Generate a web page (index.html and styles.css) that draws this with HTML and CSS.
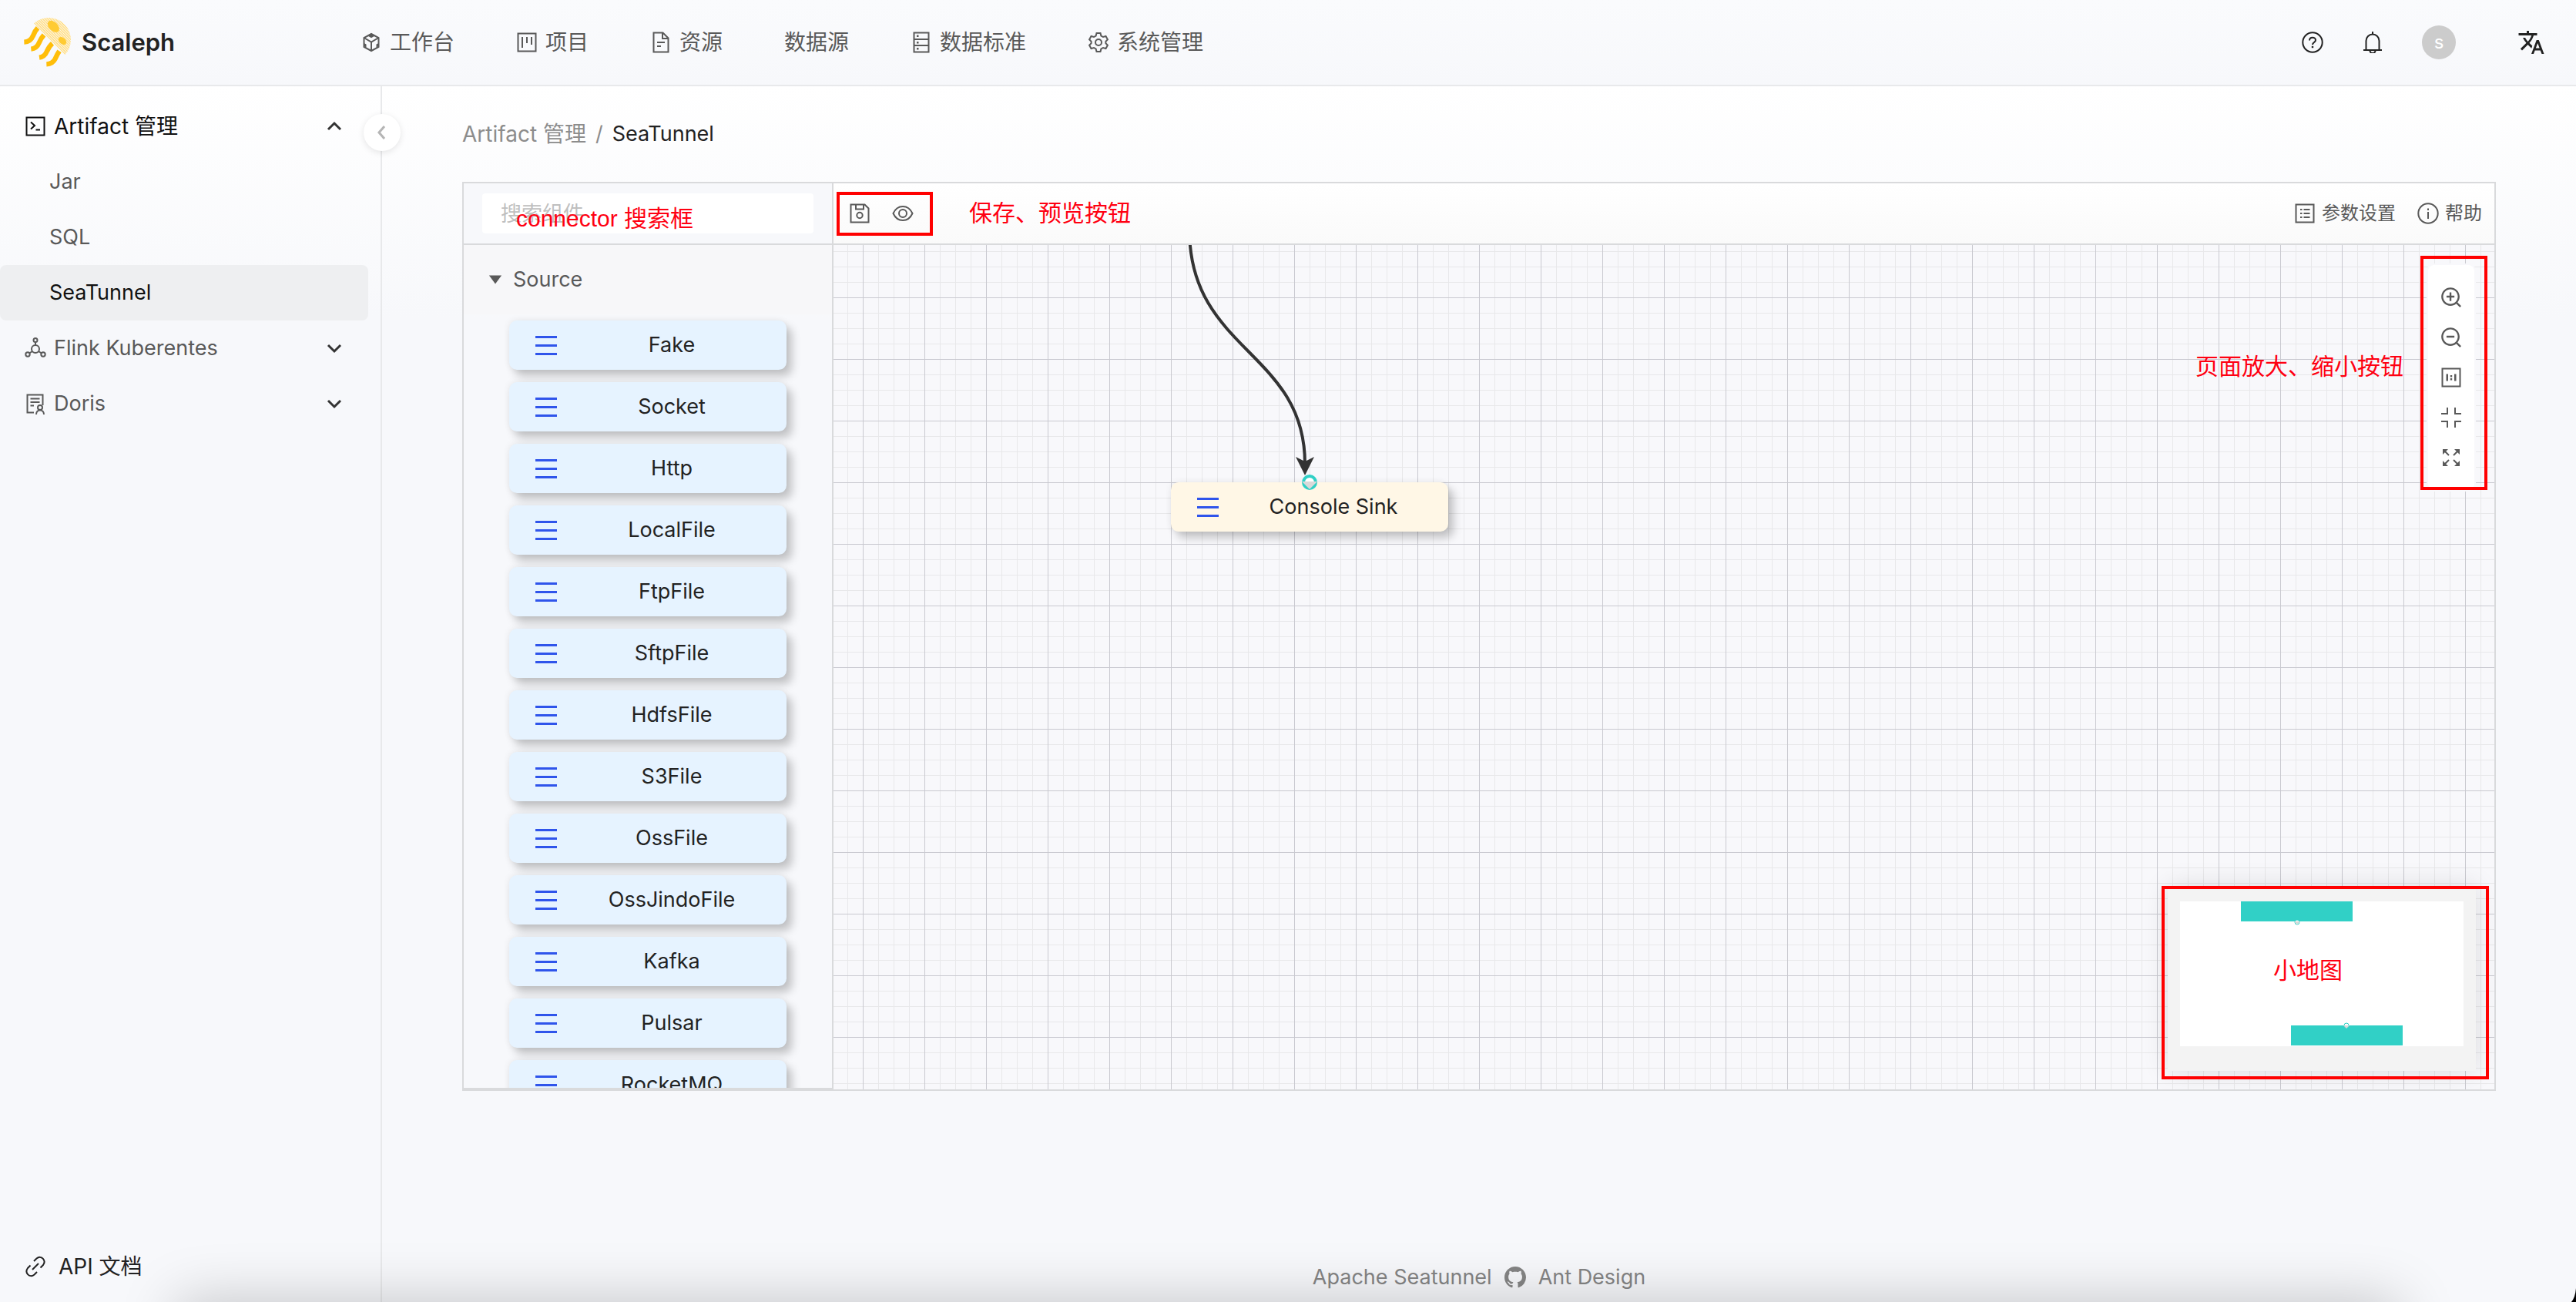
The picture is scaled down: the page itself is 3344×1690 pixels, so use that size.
FILE: index.html
```html
<!DOCTYPE html>
<html lang="zh-CN">
<head>
<meta charset="utf-8">
<title>Scaleph - SeaTunnel</title>
<link rel="stylesheet" href="styles.css">
</head>
<body>
<div class="app">
  <header class="header">
    <a class="brand" href="#">
      <svg class="brand-logo" viewBox="33 22 192 204" aria-hidden="true">
        <defs>
          <pattern id="stripes" width="7" height="7" patternUnits="userSpaceOnUse" patternTransform="rotate(45)">
            <rect width="7" height="4" fill="#ffdc80"/>
          </pattern>
        </defs>
        <g fill="none" stroke="#ffbe0a" stroke-width="19">
          <path d="M90 68Q78 80 72 98Q62 122 37 123"/>
          <path d="M114 95Q102 108 95 126Q86 148 64 150"/>
          <path d="M147 128Q135 138 126 158Q117 180 96 183"/>
          <path d="M174 158Q166 170 158 188Q148 208 124 209"/>
        </g>
        <path d="M75 50A86 86 0 0 1 196 172Z" fill="#fdf8ea"/>
        <path d="M75 50A86 86 0 0 1 196 172Z" fill="url(#stripes)"/>
        <ellipse cx="151" cy="62" rx="27" ry="17" transform="rotate(45 151 62)" fill="#ffcb33"/>
        <ellipse cx="186" cy="118" rx="18" ry="12" transform="rotate(42 186 118)" fill="#ffcb33"/>
      </svg>
      <span class="brand-name">Scaleph</span>
    </a>
    <nav class="topnav">
      <a href="#"><svg class="icon" viewBox="0 0 28 28"><path d="M14 3l9.500 5v12L14 25l-9.500-5V8z"/><path d="M4.500 8L14 13.500 23.500 8M14 13.500V25"/><path class="solid" d="M14 2.500l5 2.700-5 3-5-3zM4.500 15l3 1.600v4l-3-1.600zM23.500 15l-3 1.600v4l3-1.600z"/></svg>工作台</a>
      <a href="#"><svg class="icon" viewBox="0 0 28 28"><path d="M2.500 2.500h23v23h-23z"/><path d="M8 7v14M14 7v8M20 7v10"/></svg>项目</a>
      <a href="#"><svg class="icon" viewBox="0 0 28 28"><path d="M4.500 1.500h12l7 7v18h-19z"/><path d="M16 2v7h7M9 14h10M9 19h5"/></svg>资源</a>
      <a href="#">数据源</a>
      <a href="#"><svg class="icon" viewBox="0 0 28 28"><path d="M4.500 1.500h19v25h-19zM4.500 10h19M4.500 18h19"/><path class="solid" d="M8 4.500h2.500V7H8zM8 13h2.500v2.500H8zM8 21h2.500v2.500H8z"/></svg>数据标准</a>
      <a href="#"><svg class="icon" viewBox="0 0 28 28"><path d="M11.500 2h5l.9 3.500 2.600 1.500 3.500-1 2.400 4.300-2.500 2.500v2.400l2.500 2.500-2.400 4.300-3.500-1-2.600 1.500-.9 3.500h-5l-.9-3.500L8 21l-3.500 1-2.400-4.300 2.500-2.500v-2.400L2.100 10.300 4.500 6 8 7l2.600-1.500z"/><circle cx="14" cy="14" r="4"/></svg>系统管理</a>
    </nav>
    <div class="header-tools">
      <button class="tool" aria-label="Help"><svg class="icon dark" viewBox="0 0 28 28"><circle cx="14" cy="14" r="12.700"/><path d="M10 11.500c0-5 8-5 8-.5 0 3-4 3-4 6"/><path class="solid" d="M12.800 18.800h2.400v2.400h-2.400z"/></svg></button>
      <button class="tool" aria-label="Notifications"><svg class="icon dark" viewBox="0 0 28 28"><path d="M5.500 23V12a8.500 8.500 0 0 1 17 0v11M2 24h24M14 0v4M10.500 25a3.500 3 0 0 0 7 0"/></svg></button>
      <button class="avatar" aria-label="Account">s</button>
      <button class="tool language" aria-label="Language"><svg class="glyph" viewBox="0 0 24 24"><path d="M12.870 15.070l-2.540-2.510.03-.03c1.740-1.940 2.980-4.170 3.710-6.530H17V4h-7V2H8v2H1v1.990h11.170C11.500 7.920 10.440 9.750 9 11.350 8.070 10.320 7.300 9.190 6.690 8h-2c.73 1.630 1.730 3.170 2.980 4.560l-5.090 5.020L4 19l5-5 3.110 3.110.76-2.040zM18.500 10h-2L12 22h2l1.120-3h4.750L21 22h2l-4.500-12zm-2.620 7l1.620-4.330L19.120 17h-3.240z"/></svg></button>
    </div>
  </header>

  <div class="body">
    <aside class="sidebar">
      <nav class="sidenav">
        <a class="entry open" href="#"><svg class="icon" viewBox="0 0 28 28"><path d="M2.500 2.500h23v23h-23zM8 8.500l5 4.500-5 4.500M14.500 18.500H20"/></svg><span>Artifact 管理</span><svg class="chevron" viewBox="0 0 20 20"><path d="M2 14l8-8 8 8"/></svg></a>
        <a class="entry sub" href="#">Jar</a>
        <a class="entry sub" href="#">SQL</a>
        <a class="entry sub active" href="#">SeaTunnel</a>
        <a class="entry" href="#"><svg class="icon" viewBox="0 0 28 28"><circle cx="14" cy="3.500" r="2.500"/><circle cx="14" cy="15" r="5"/><circle cx="4" cy="22" r="2.700"/><circle cx="24" cy="22" r="2.700"/><path d="M14 6v4M10 18l-4 2.500M18 18l4 2.500"/></svg><span>Flink Kuberentes</span><svg class="chevron" viewBox="0 0 20 20"><path d="M2 6l8 8 8-8"/></svg></a>
        <a class="entry" href="#"><svg class="icon" viewBox="0 0 28 28"><path d="M12 25.500H3.500v-23h20V16M7.500 7.500h12M7.500 12h12M7.500 16.500H12"/><circle cx="20" cy="19" r="3"/><path d="M15 28c0-7.500 10-7.500 10 0"/></svg><span>Doris</span><svg class="chevron" viewBox="0 0 20 20"><path d="M2 6l8 8 8-8"/></svg></a>
      </nav>
      <a class="api-link" href="#"><svg class="icon dark" viewBox="0 0 28 28"><path d="M12 7l3.500-3.500c6-5 13 2.500 8.500 8.500l-3.500 3.500M16 21l-3.500 3.500c-6 5-13-2.500-8.500-8.500L7.500 12.500M10 18l8-8"/></svg>API 文档</a>
      <button class="collapse" aria-label="Collapse"><svg viewBox="0 0 20 20"><path d="M13 2l-7 8 7 8"/></svg></button>
    </aside>

    <main class="main">
      <nav class="breadcrumb"><a href="#">Artifact 管理</a><span>/</span><b>SeaTunnel</b></nav>

      <section class="editor">
        <div class="palette">
          <div class="search">
            <input type="text" placeholder="搜索组件" aria-label="搜索组件">
            <span class="note note-search">connector 搜索框</span>
          </div>
          <button class="group"><svg viewBox="0 0 20 20"><path d="M1 4h18l-9 12z"/></svg>Source</button>
          <ul class="components">
            <li class="component"><i class="bars"></i><span>Fake</span></li>
            <li class="component"><i class="bars"></i><span>Socket</span></li>
            <li class="component"><i class="bars"></i><span>Http</span></li>
            <li class="component"><i class="bars"></i><span>LocalFile</span></li>
            <li class="component"><i class="bars"></i><span>FtpFile</span></li>
            <li class="component"><i class="bars"></i><span>SftpFile</span></li>
            <li class="component"><i class="bars"></i><span>HdfsFile</span></li>
            <li class="component"><i class="bars"></i><span>S3File</span></li>
            <li class="component"><i class="bars"></i><span>OssFile</span></li>
            <li class="component"><i class="bars"></i><span>OssJindoFile</span></li>
            <li class="component"><i class="bars"></i><span>Kafka</span></li>
            <li class="component"><i class="bars"></i><span>Pulsar</span></li>
            <li class="component"><i class="bars"></i><span>RocketMQ</span></li>
          </ul>
        </div>

        <div class="workspace">
          <div class="toolbar">
            <div class="actions">
              <button class="tool" aria-label="保存"><svg class="icon" viewBox="0 0 28 28"><path d="M2.500 2.500h18l5 5v18h-23zM9 2.500v6h10v-6"/><circle cx="14" cy="16.500" r="3.700"/></svg></button>
              <button class="tool" aria-label="预览"><svg class="icon" viewBox="0 0 28 28"><path d="M1.500 14C7 2 21 2 26.500 14 21 26 7 26 1.500 14z"/><circle cx="14" cy="14" r="5"/></svg></button>
            </div>
            <span class="note">保存、预览按钮</span>
            <div class="settings">
              <button class="labelled"><svg class="icon" viewBox="0 0 28 28"><path d="M2.500 2.500h23v23h-23zM12.500 9h8M12.500 14h8M12.500 19h8M8 9h2.500M8 14h2.500M8 19h2.500"/></svg>参数设置</button>
              <button class="labelled"><svg class="icon" viewBox="0 0 28 28"><circle cx="14" cy="14" r="12.700"/><path d="M14 12v9M14 7.500V10"/></svg>帮助</button>
            </div>
          </div>

          <div class="canvas">
            <svg class="edges" aria-hidden="true">
              <path d="M462 -20C462 138 612 138 612 284" fill="none" stroke="#333" stroke-width="4"/>
              <path d="M612 299L600 275L612 281L624 275Z" fill="#333"/>
            </svg>
            <div class="component node">
              <i class="bars"></i><span>Console Sink</span>
              <svg class="port" viewBox="0 0 20 20"><circle cx="10" cy="10" r="8" fill="#fff" stroke="#31d0c6" stroke-width="4"/><path d="M0 9h20L10 19z" fill="#d9d9d9"/></svg>
            </div>

            <span class="note note-zoom">页面放大、缩小按钮</span>
            <div class="zoombar">
              <button class="tool" aria-label="放大"><svg class="glyph" viewBox="64 64 896 896"><path d="M637 443H519V309c0-4.400-3.600-8-8-8h-60c-4.400 0-8 3.600-8 8v134H325c-4.400 0-8 3.600-8 8v60c0 4.400 3.600 8 8 8h118v134c0 4.400 3.600 8 8 8h60c4.400 0 8-3.600 8-8V519h118c4.400 0 8-3.600 8-8v-60c0-4.400-3.600-8-8-8zm284 424L775 721c122.100-148.900 113.600-369.500-26-509-148-148.100-388.400-148.100-537 0-148.100 148.600-148.100 389 0 537 139.500 139.600 360.100 148.100 509 26l146 146c3.200 2.800 8.300 2.800 11 0l43-43c2.800-2.700 2.800-7.800 0-11zM696 696c-118.800 118.700-311.200 118.700-430 0-118.700-118.800-118.700-311.200 0-430 118.800-118.700 311.200-118.700 430 0 118.700 118.800 118.700 311.200 0 430z"/></svg></button>
              <button class="tool" aria-label="缩小"><svg class="glyph" viewBox="64 64 896 896"><path d="M637 443H325c-4.400 0-8 3.600-8 8v60c0 4.400 3.600 8 8 8h312c4.400 0 8-3.600 8-8v-60c0-4.400-3.600-8-8-8zm284 424L775 721c122.100-148.900 113.600-369.500-26-509-148-148.100-388.400-148.100-537 0-148.100 148.600-148.100 389 0 537 139.500 139.600 360.100 148.100 509 26l146 146c3.200 2.800 8.300 2.800 11 0l43-43c2.800-2.700 2.800-7.800 0-11zM696 696c-118.800 118.700-311.200 118.700-430 0-118.700-118.800-118.700-311.200 0-430 118.800-118.700 311.200-118.700 430 0 118.700 118.800 118.700 311.200 0 430z"/></svg></button>
              <button class="tool" aria-label="实际大小"><svg class="icon" viewBox="0 0 28 28"><path d="M2.500 2.500h23v23h-23z"/><path class="solid" d="M7.500 9.500H10v9H7.500zM18 9.500h2.500v9H18zM12.800 11h2.400v2.500h-2.400zM12.800 15h2.400v2.500h-2.400z"/></svg></button>
              <button class="tool" aria-label="适应画布"><svg class="icon" viewBox="0 0 28 28"><path d="M1 9h8V1M27 9h-8V1M1 19h8v8M27 19h-8v8"/></svg></button>
              <button class="tool" aria-label="全屏"><svg class="icon" viewBox="0 0 28 28"><path d="M4 4l7 7M24 4l-7 7M4 24l7-7M24 24l-7-7"/><path class="solid" d="M3 3h7l-7 7zM25 3h-7l7 7zM3 25h7l-7-7zM25 25h-7l7-7z"/></svg></button>
              <i class="frame frame-zoom"></i>
            </div>

            <div class="minimap">
              <svg viewBox="0 0 368 188" aria-hidden="true">
                <path d="M0 0h368v188H0z" fill="#fff"/>
                <path d="M79 0h145v26H79zM144 161h145v26H144z" fill="#31d0c6"/>
                <g fill="#fff" stroke="#31d0c6"><circle cx="152" cy="27" r="3"/><circle cx="216" cy="161" r="3"/></g>
                <path d="M148 26h8l-4 4zM212 161h8l-4 4z" fill="#d9d9d9"/>
              </svg>
              <span class="note note-map">小地图</span>
              <i class="frame frame-map"></i>
            </div>
          </div>
        </div>
      </section>

      <footer class="footer">
        <a href="#">Apache Seatunnel</a>
        <a href="#" aria-label="GitHub"><svg class="glyph" viewBox="0 0 16 16"><path d="M8 0C3.580 0 0 3.580 0 8c0 3.540 2.290 6.530 5.470 7.590.4.070.55-.17.55-.38 0-.19-.01-.82-.01-1.490-2.010.37-2.530-.49-2.690-.94-.09-.23-.48-.94-.82-1.130-.28-.15-.68-.52-.01-.53.63-.01 1.080.58 1.230.82.72 1.210 1.870.87 2.330.66.070-.52.28-.87.51-1.070-1.780-.2-3.640-.89-3.640-3.950 0-.87.31-1.590.82-2.150-.08-.2-.36-1.020.08-2.120 0 0 .67-.21 2.200.82.64-.18 1.320-.27 2-.27.68 0 1.360.09 2 .27 1.530-1.040 2.200-.82 2.200-.82.44 1.100.16 1.920.08 2.120.51.56.82 1.270.82 2.150 0 3.070-1.870 3.750-3.650 3.950.29.25.54.73.54 1.480 0 1.070-.01 1.930-.01 2.200 0 .21.15.46.55.38A8.013 8.013 0 0016 8c0-4.420-3.580-8-8-8z"/></svg></a>
        <a href="#">Ant Design</a>
      </footer>
    </main>
  </div>
  <i class="window-shadow"></i>
  <svg class="window-corner" viewBox="0 0 6 18" aria-hidden="true"><path d="M6 0Q5 12 0 18h6z"/></svg>
</div>
</body>
</html>
```
FILE: styles.css
```css
* {
  box-sizing: border-box;
}

body {
  margin: 0;
  color: #222;
  background: #f7f8fb;
  font-family: Inter, "Noto Sans CJK SC", sans-serif;
  font-size: 27px;
  line-height: 44px;
}

a {
  color: inherit;
  text-decoration: none;
}

button {
  padding: 0;
  border: 0;
  background: none;
  color: inherit;
  font: inherit;
}

svg {
  display: block;
  flex: none;
}

.icon,
.glyph {
  width: 28px;
  height: 28px;
}

.icon {
  fill: none;
  stroke: #595959;
  stroke-width: 2;
}

.icon.dark {
  stroke: #222;
}

.icon .solid {
  fill: #595959;
  stroke: none;
}

.icon.dark .solid {
  fill: #222;
}

.glyph {
  fill: #595959;
}

.app {
  position: relative;
  display: flex;
  flex-direction: column;
  height: 100vh;
  overflow: hidden;
}

/* Header */

.header {
  display: flex;
  align-items: center;
  flex: none;
  height: 112px;
  padding: 0 40px 0 30px;
  border-bottom: 2px solid #e8e9eb;
  background: linear-gradient(#fafbfd, #f7f8fb);
}

.brand {
  display: flex;
  align-items: center;
  gap: 12px;
  width: 438px;
}

.brand-logo {
  width: 64px;
  height: 68px;
}

.brand-name {
  font-size: 31px;
  font-weight: 600;
}

.topnav {
  display: flex;
  gap: 80px;
  color: #595959;
  font-size: 28px;
}

.topnav a {
  display: flex;
  align-items: center;
  gap: 10px;
}

.header-tools {
  display: flex;
  align-items: center;
  gap: 50px;
  margin-left: auto;
}

.avatar {
  width: 44px;
  height: 44px;
  border-radius: 50%;
  background: #ccc;
  color: #fff;
  font-size: 24px;
}

.language {
  margin-left: 30px;
}

.language .glyph {
  width: 36px;
  height: 36px;
  fill: #222;
}

/* Sidebar */

.body {
  display: flex;
  flex: 1;
  min-height: 0;
  background: linear-gradient(#fff, #f7f8fb 300px);
}

.sidebar {
  position: relative;
  display: flex;
  flex-direction: column;
  flex: none;
  width: 496px;
  padding: 16px 0 24px;
  border-right: 2px solid #e8e9eb;
}

.entry {
  display: flex;
  align-items: center;
  gap: 10px;
  height: 72px;
  margin-right: 16px;
  padding: 0 34px 0 32px;
  border-radius: 8px;
  color: #595959;
}

.entry.open,
.entry.active {
  color: #111;
}

.entry.open,
.api-link,
.breadcrumb a {
  font-size: 28px;
}

.entry.open .icon {
  stroke: #111;
}

.entry.sub {
  padding-left: 64px;
}

.entry.active {
  background: #eeeff1;
}

.chevron {
  width: 20px;
  height: 20px;
  margin-left: auto;
  fill: none;
  stroke: #333;
  stroke-width: 3;
}

.api-link {
  display: flex;
  align-items: center;
  gap: 16px;
  margin-top: auto;
  padding-left: 32px;
}

.collapse {
  position: absolute;
  top: 36px;
  right: -26px;
  display: grid;
  place-items: center;
  width: 48px;
  height: 48px;
  border-radius: 50%;
  background: #fff;
  box-shadow: 0 2px 8px rgba(0, 0, 0, 0.1);
}

.collapse svg {
  width: 20px;
  height: 20px;
  fill: none;
  stroke: #b5b5b5;
  stroke-width: 3;
}

/* Main column */

.main {
  display: flex;
  flex: 1;
  flex-direction: column;
  min-width: 0;
  padding: 40px 104px 10px;
}

.breadcrumb {
  display: flex;
  gap: 12px;
  margin-bottom: 40px;
  color: #8c8c8c;
}

.breadcrumb b {
  color: #222;
  font-weight: 400;
}

.editor {
  display: flex;
  flex: 1;
  min-height: 0;
  border: 2px solid #d9dadc;
}

/* Component palette */

.palette {
  display: flex;
  flex: none;
  flex-direction: column;
  width: 480px;
  overflow: hidden;
  border-right: 2px solid #d9dadc;
  border-bottom: 2px solid #d9dadc;
}

.search {
  position: relative;
  flex: none;
  height: 80px;
  padding: 13px 24px;
  border-bottom: 2px solid #d9dadc;
  background: #f7f8fb;
}

.search input {
  display: block;
  width: 100%;
  height: 52px;
  padding: 0 24px;
  border: 0;
  border-radius: 4px;
  background: #fff;
  font: inherit;
}

.search input::placeholder {
  color: #bfbfbf;
  opacity: 1;
}

.group {
  display: flex;
  align-items: center;
  flex: none;
  gap: 14px;
  height: 90px;
  padding-left: 32px;
  background: #f7f7f9;
  color: #595959;
}

.group svg {
  width: 18px;
  height: 18px;
  fill: #595959;
}

.components {
  display: flex;
  flex-direction: column;
  align-items: center;
  gap: 16px;
  margin: 0;
  padding: 8px 0;
  list-style: none;
}

.component {
  display: flex;
  flex: none;
  align-items: center;
  width: 360px;
  height: 64px;
  padding-left: 34px;
  border-radius: 10px;
  background: #e6f3ff;
  box-shadow: 7px 8px 12px rgba(0, 0, 0, 0.22), -1px -1px 8px rgba(0, 0, 0, 0.06);
}

.component span {
  flex: 1;
  text-align: center;
}

.bars {
  width: 28px;
  height: 25px;
  border: solid #2f54eb;
  border-width: 3px 0;
  background: linear-gradient(#2f54eb, #2f54eb) center / 100% 3px no-repeat;
}

/* Workspace */

.workspace {
  display: flex;
  flex: 1;
  flex-direction: column;
  min-width: 0;
}

.toolbar {
  display: flex;
  align-items: center;
  flex: none;
  height: 80px;
  padding: 0 16px 0 4px;
  border-bottom: 2px solid #d9dadc;
  background: linear-gradient(#fff, #fafafa);
}

.actions {
  display: flex;
  align-items: center;
  gap: 28px;
  width: 125px;
  height: 57px;
  margin-right: 47px;
  padding-left: 12px;
  border: 4px solid #f00;
}

.settings {
  display: flex;
  gap: 28px;
  margin-left: auto;
  color: #595959;
  font-size: 24px;
}

.labelled {
  display: flex;
  align-items: center;
  gap: 8px;
}

.canvas {
  position: relative;
  flex: 1;
  overflow: hidden;
  background-color: #f8f8fb;
  background-image:
    linear-gradient(90deg, #c9c9d0 1px, transparent 1px),
    linear-gradient(#c9c9d0 1px, transparent 1px),
    linear-gradient(90deg, #e8e8ea 1px, transparent 1px),
    linear-gradient(#e8e8ea 1px, transparent 1px);
  background-position: 38px 68px;
  background-size: 80px 80px, 80px 80px, 20px 20px, 20px 20px;
}

.edges {
  position: absolute;
  inset: 0;
  width: 100%;
  height: 100%;
}

.node {
  position: absolute;
  top: 308px;
  left: 438px;
  background: #fff7e6;
}

.port {
  position: absolute;
  top: -10px;
  left: 170px;
  width: 20px;
  height: 20px;
}

.zoombar {
  position: absolute;
  top: 26px;
  right: 26px;
  display: flex;
  flex-direction: column;
  align-items: center;
  gap: 24px;
  width: 60px;
  padding: 28px 0;
  border-radius: 8px;
  background: #fff;
  box-shadow: 0 0 0 2px #f8f8fb;
}

.minimap {
  position: absolute;
  right: 24px;
  bottom: 24px;
  width: 400px;
  height: 240px;
  padding: 20px 16px;
  background: #f3f3f3;
  box-shadow: 0 0 32px rgba(0, 0, 0, 0.12);
}

/* Red call-outs */

.note {
  color: #ff0011;
  font-family: "Liberation Sans", "Noto Sans CJK SC", sans-serif;
  font-size: 30px;
  white-space: nowrap;
}

.note-search {
  position: absolute;
  top: 24px;
  left: 68px;
}

.note-zoom {
  position: absolute;
  top: 136px;
  right: 118px;
}

.note-map {
  position: absolute;
  top: 88px;
  left: 137px;
}

.frame {
  position: absolute;
  border: 4px solid #f00;
}

.frame-zoom {
  inset: -12px -17px 0 -10px;
}

.frame-map {
  inset: 0 -17px -11px -8px;
}

/* Footer */

.footer {
  display: flex;
  align-items: center;
  justify-content: center;
  gap: 16px;
  margin-top: 220px;
  color: #858585;
}

.footer .glyph {
  fill: #858585;
}

.window-shadow {
  position: absolute;
  top: 100%;
  right: 230px;
  left: 230px;
  height: 80px;
  box-shadow: 0 0 76px rgba(0, 0, 0, 0.22);
}

.window-corner {
  position: absolute;
  right: 0;
  bottom: 0;
  width: 6px;
  height: 18px;
}
```
